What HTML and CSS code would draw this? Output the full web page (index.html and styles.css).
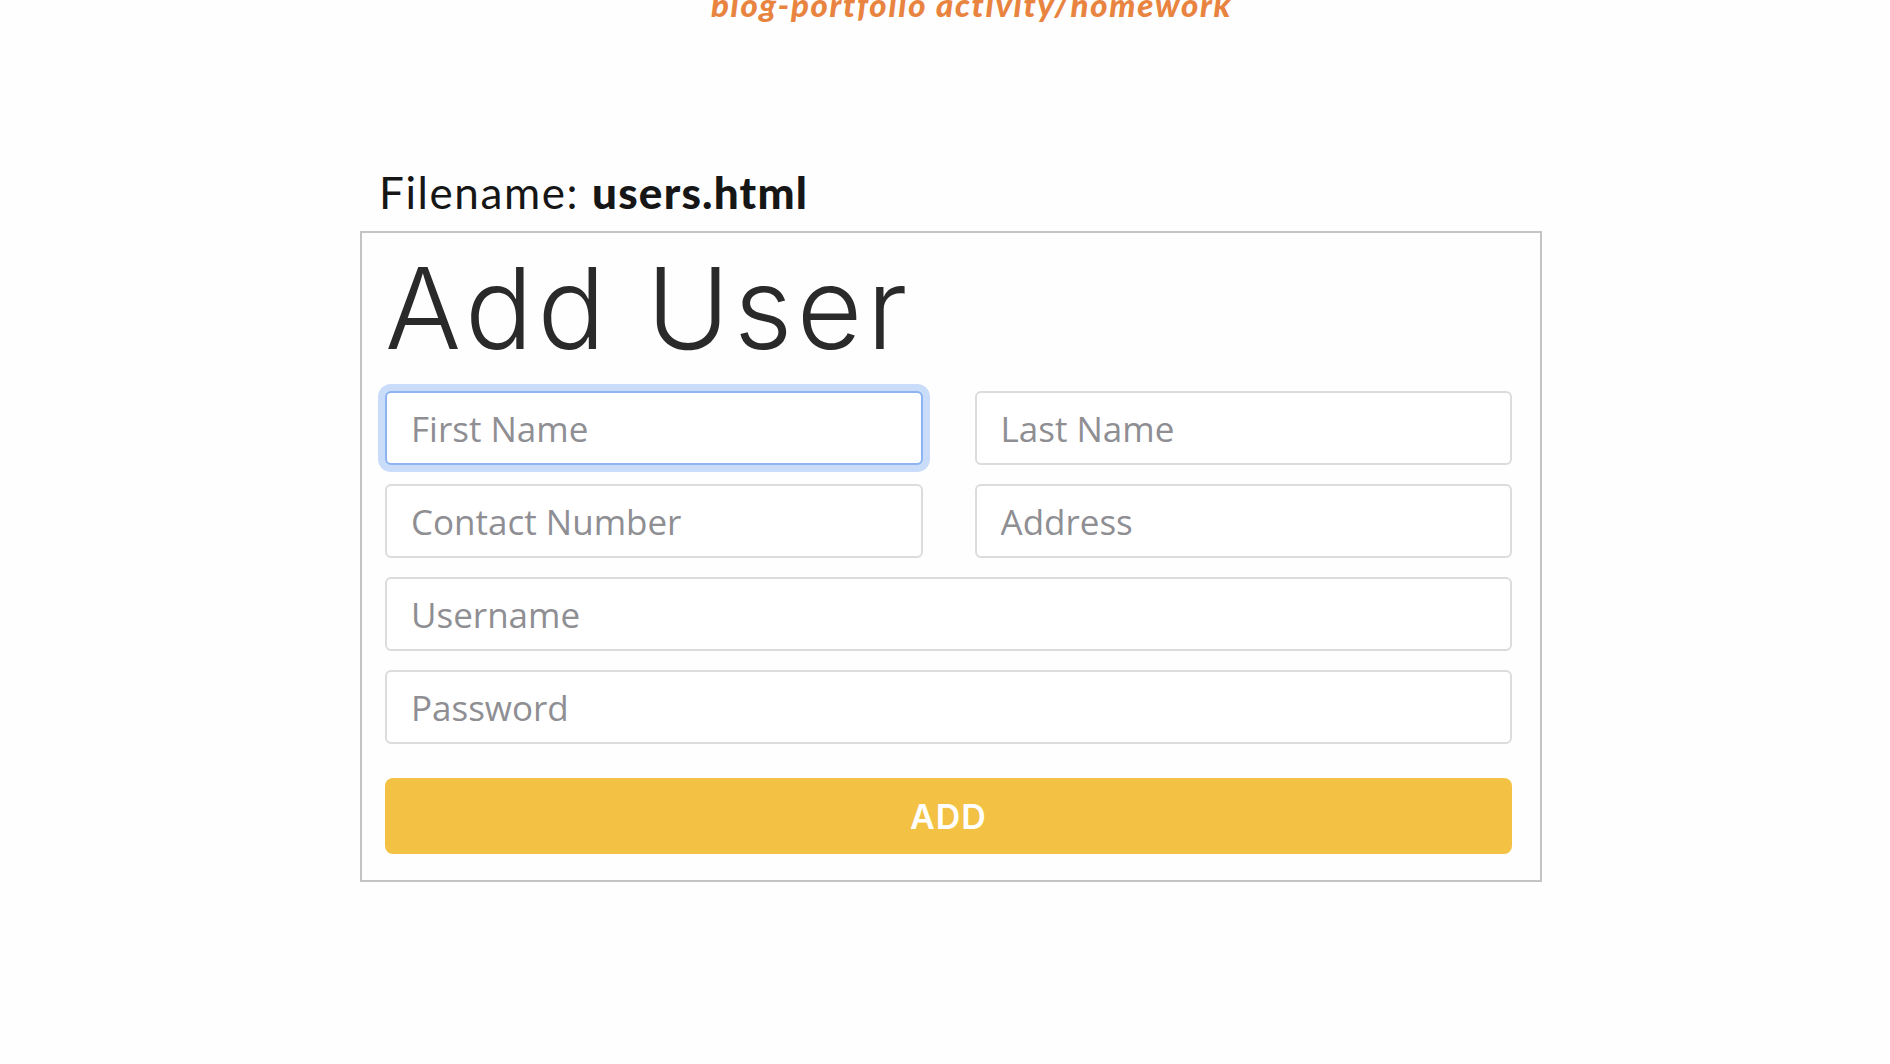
FILE: index.html
```html
<!DOCTYPE html>
<html lang="en">
<head>
<meta charset="utf-8">
<title>Add User</title>
<link rel="stylesheet" href="styles.css">
</head>
<body>
<header class="top-title">blog-portfolio activity/homework</header>
<main class="page">
  <p class="filename">Filename: <strong>users.html</strong></p>
  <section class="card">
    <h1 class="card-title">Add User</h1>
    <form class="form">
      <div class="row two">
        <input class="field focused" type="text" placeholder="First Name">
        <input class="field" type="text" placeholder="Last Name">
      </div>
      <div class="row two">
        <input class="field" type="text" placeholder="Contact Number">
        <input class="field" type="text" placeholder="Address">
      </div>
      <div class="row">
        <input class="field" type="text" placeholder="Username">
      </div>
      <div class="row">
        <input class="field" type="password" placeholder="Password">
      </div>
      <button class="btn-add" type="button">ADD</button>
    </form>
  </section>
</main>
</body>
</html>
```
FILE: styles.css
```css
* { box-sizing: border-box; }
html, body { margin: 0; padding: 0; background: #fefefe; }
body { font-family: "Open Sans", "Liberation Sans", sans-serif; overflow: hidden; }

.top-title {
  font-family: "Lato", "Liberation Sans", sans-serif;
  font-weight: 900;
  font-style: italic;
  font-size: 33px;
  line-height: 33px;
  letter-spacing: 1.7px;
  color: #e8843f;
  padding-left: 711px;
  margin-top: -12px;
  height: 22px;
  white-space: nowrap;
}

.page {
  padding-left: 360px;
  width: 1542px;
  padding-top: 156px;
}

.filename {
  margin: 0 0 13px 19px;
  font-family: "Lato", "Liberation Sans", sans-serif;
  font-size: 44px;
  line-height: 52px;
  letter-spacing: 1.6px;
  color: #161616;
  font-weight: 400;
}
.filename strong { font-weight: 900; letter-spacing: 1.2px; }

.card {
  border: 2px solid #c4c4c4;
  padding: 0 28px 26px 23px;
}

.card-title {
  margin: 0;
  font-family: "Inter", "Liberation Sans", sans-serif;
  font-weight: 300;
  font-size: 113px;
  line-height: 150px;
  color: #2a2a2a;
  letter-spacing: 4.5px;
}

.form { display: flex; flex-direction: column; gap: 19px; margin-top: 8px; }
.row { display: flex; gap: 52px; }
.row.two .field { flex: 1 1 0; }
.row .field { flex: 1 1 auto; }

.field {
  height: 74px;
  border: 2px solid #dcdcdc;
  border-radius: 6px;
  padding: 0 24px;
  font-family: "Open Sans", "Liberation Sans", sans-serif;
  font-size: 35px;
  color: #333;
  background: #fff;
  outline: none;
}
.field::placeholder { color: #8e8e93; opacity: 1; }
.field.focused {
  border-color: #8db3f2;
  box-shadow: 0 0 0 7px #c9dcfa;
}

.btn-add {
  margin-top: 15px;
  height: 76px;
  border: none;
  border-radius: 8px;
  background: #f3c244;
  color: #ffffff;
  font-family: "Inter", "Liberation Sans", sans-serif;
  font-weight: 600;
  font-size: 34px;
  letter-spacing: 1px;
  cursor: pointer;
}
```
